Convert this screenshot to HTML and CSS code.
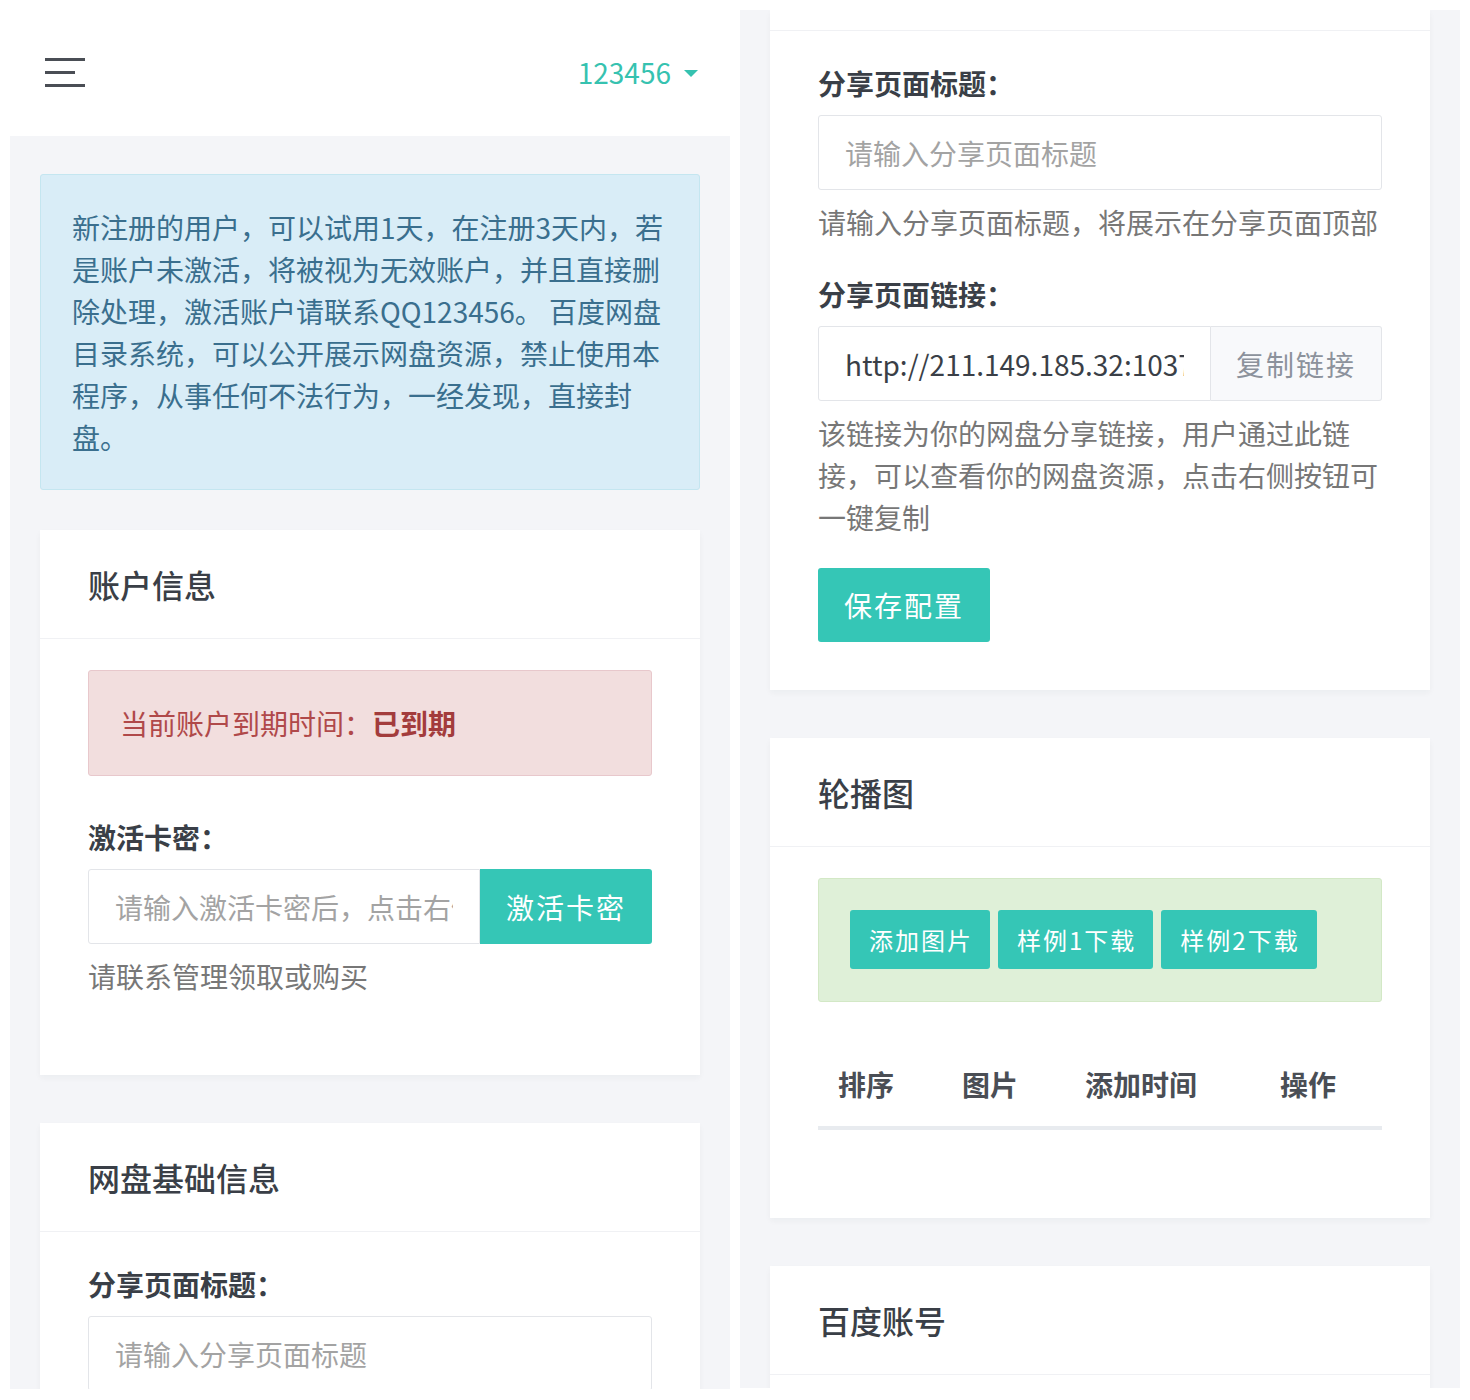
FILE: index.html
```html
<!DOCTYPE html>
<html lang="zh-CN">
<head>
<meta charset="UTF-8">
<meta name="viewport" content="width=device-width, initial-scale=1.0">
<title>网盘目录系统 - 用户中心</title>
<link rel="stylesheet" href="styles.css">
</head>
<body>
	<!-- first screen: top of the user center -->
	<div class="Screen ScreenTop">
		<div class="TopBar">
			<span class="MenuToggle"><i></i><i class="Short"></i><i></i></span>
			<span class="UserName">123456<b class="Caret"></b></span>
		</div>
		<div class="Content">
			<div class="Alert AlertInfo">新注册的用户，可以试用1天，在注册3天内，若是账户未激活，将被视为无效账户，并且直接删除处理，激活账户请联系QQ123456。 百度网盘目录系统，可以公开展示网盘资源，禁止使用本程序，从事任何不法行为，一经发现，直接封盘。</div>

			<div class="Card">
				<div class="CardHeader">账户信息</div>
				<div class="CardBody">
					<div class="Alert AlertDanger">当前账户到期时间：<strong>已到期</strong></div>
					<div class="FormGroup">
						<label class="Label">激活卡密：</label>
						<div class="InputGroup">
							<input class="Input" type="text" placeholder="请输入激活卡密后，点击右侧按钮">
							<button class="Btn">激活卡密</button>
						</div>
						<div class="HelpBlock">请联系管理领取或购买</div>
					</div>
				</div>
			</div>

			<div class="Card">
				<div class="CardHeader">网盘基础信息</div>
				<div class="CardBody">
					<div class="FormGroup">
						<label class="Label">分享页面标题：</label>
						<input class="Input" type="text" placeholder="请输入分享页面标题">
					</div>
				</div>
			</div>
		</div>
	</div>

	<!-- second screen: same page scrolled down, base info card continues from its header -->
	<div class="Screen ScreenScrolled">
		<div class="Content">
			<div class="Card">
				<div class="CardHeader CardHeaderTail"></div>
				<div class="CardBody">
					<div class="FormGroup">
						<label class="Label">分享页面标题：</label>
						<input class="Input" type="text" placeholder="请输入分享页面标题">
						<div class="HelpBlock">请输入分享页面标题，将展示在分享页面顶部</div>
					</div>
					<div class="FormGroup">
						<label class="Label">分享页面链接：</label>
						<div class="InputGroup">
							<input class="Input InputValue" type="text" value="http://211.149.185.32:10378/share/123456" readonly>
							<span class="Addon">复制链接</span>
						</div>
						<div class="HelpBlock">该链接为你的网盘分享链接，用户通过此链接，可以查看你的网盘资源，点击右侧按钮可一键复制</div>
					</div>
					<button class="Btn BtnSave">保存配置</button>
				</div>
			</div>

			<div class="Card">
				<div class="CardHeader">轮播图</div>
				<div class="CardBody">
					<div class="Alert AlertSuccess">
						<button class="Btn BtnSmall">添加图片</button>
						<button class="Btn BtnSmall">样例1下载</button>
						<button class="Btn BtnSmall">样例2下载</button>
					</div>
					<table class="Table">
						<thead>
							<tr>
								<th class="ColSort">排序</th>
								<th class="ColImage">图片</th>
								<th class="ColTime">添加时间</th>
								<th class="ColAction">操作</th>
							</tr>
						</thead>
						<tbody></tbody>
					</table>
				</div>
			</div>

			<div class="Card">
				<div class="CardHeader">百度账号</div>
				<div class="CardBody"></div>
			</div>
		</div>
	</div>
</body>
</html>
```

FILE: styles.css
```css
* {
	box-sizing: border-box;
}

body {
	margin: 0;
	padding: 0 10px;
	background-color: #fff;
	font-family: "Noto Sans CJK SC", "Noto Sans", sans-serif;
	font-size: 28px;
	line-height: 42px;
	color: #3a3f47;
	display: flex;
	align-items: flex-start;
	gap: 10px;
}

.Screen {
	width: 720px;
	overflow: hidden;
	display: flex;
	flex-direction: column;
}

.ScreenTop {
	height: 1389px;
}

.ScreenScrolled {
	height: 1378px;
	margin-top: 10px;
}

/* top bar */
.TopBar {
	height: 136px;
	flex: none;
	background-color: #fff;
	padding: 8px 32px 0 35px;
	display: flex;
	align-items: center;
	justify-content: space-between;
}

.MenuToggle {
	display: flex;
	flex-direction: column;
	gap: 10px;
	width: 40px;
}

.MenuToggle i {
	display: block;
	height: 3px;
	width: 40px;
	background-color: #4a4e55;
}

.MenuToggle i.Short {
	width: 30px;
}

.UserName {
	color: #36c2b0;
	font-size: 28px;
	display: flex;
	align-items: center;
	gap: 13px;
}

.Caret {
	width: 0;
	height: 0;
	border-left: 7px solid transparent;
	border-right: 7px solid transparent;
	border-top: 7px solid #36c2b0;
	margin-top: 2px;
}

/* gray page area */
.Content {
	flex: 1;
	background-color: #f4f5f8;
	padding: 38px 30px;
}

.ScreenScrolled .Content {
	padding-top: 0;
}

/* alerts */
.Alert {
	border: 1px solid transparent;
	border-radius: 3px;
	padding: 31px 31px;
}

.AlertInfo {
	background-color: #d9edf7;
	border-color: #c4e6f0;
	color: #3a6f8e;
	margin-bottom: 40px;
}

.AlertDanger {
	background-color: #f2dede;
	border-color: #e8c8cc;
	color: #b0494a;
	margin-bottom: 40px;
}

.AlertDanger strong {
	color: #a33c3c;
}

.AlertSuccess {
	background-color: #dff0d8;
	border-color: #d3e8c6;
	display: flex;
	gap: 8px;
	padding: 31px 31px 32px;
	margin-bottom: 40px;
}

/* cards */
.Card {
	background-color: #fff;
	box-shadow: 0 3px 6px rgba(30, 40, 60, 0.04);
	margin-bottom: 48px;
}

.CardHeader {
	height: 109px;
	padding: 0 48px;
	display: flex;
	align-items: center;
	font-size: 32px;
	font-weight: 500;
	color: #3a3f47;
	border-bottom: 1px solid #f0f1f4;
}

/* bottom strip of a header scrolled past the top */
.CardHeaderTail {
	height: 21px;
}

.CardBody {
	padding: 31px 48px 48px;
}

/* forms */
.FormGroup {
	margin-bottom: 30px;
}

.Label {
	display: block;
	font-weight: 700;
	color: #3a3f47;
	margin-bottom: 11px;
}

.Input {
	display: block;
	width: 100%;
	height: 75px;
	border: 1px solid #e3e5e9;
	border-radius: 3px;
	padding: 0 26px;
	font-family: inherit;
	font-size: 28px;
	color: #3a3f47;
	background-color: #fff;
	outline: none;
}

.Input::placeholder {
	color: #a3a3a3;
}

.InputValue {
	color: #3a3f47;
}

.InputGroup {
	display: flex;
}

.InputGroup .Input {
	flex: 1;
	min-width: 0;
	border-radius: 3px 0 0 3px;
}

.InputGroup .Btn {
	border-radius: 0 3px 3px 0;
}

.Addon {
	flex: none;
	width: 171px;
	height: 75px;
	display: flex;
	align-items: center;
	justify-content: center;
	letter-spacing: 2px;
	background-color: #f8f9fb;
	color: #8c929c;
	border: 1px solid #e3e5e9;
	border-left: none;
	border-radius: 0 3px 3px 0;
}

.HelpBlock {
	color: #777;
	margin-top: 11px;
}

/* buttons */
.Btn {
	flex: none;
	width: 172px;
	height: 75px;
	border: none;
	border-radius: 3px;
	background-color: #35c6b6;
	color: #fff;
	font-family: inherit;
	font-size: 28px;
	letter-spacing: 2px;
	padding: 0;
}

.BtnSave {
	height: 74px;
}

.BtnSmall {
	width: auto;
	height: 59px;
	font-size: 24px;
	padding: 0 17px 0 19px;
}

/* image list table */
.Table {
	width: 100%;
	border-collapse: collapse;
	margin-bottom: 40px;
	table-layout: fixed;
}

.Table th {
	text-align: left;
	font-weight: 700;
	color: #4a4e55;
	padding: 21px 20px;
	border-bottom: 4px solid #e8ebef;
}

.ColSort {
	width: 124px;
}

.ColImage {
	width: 123px;
}

.ColTime {
	width: 195px;
}
```
